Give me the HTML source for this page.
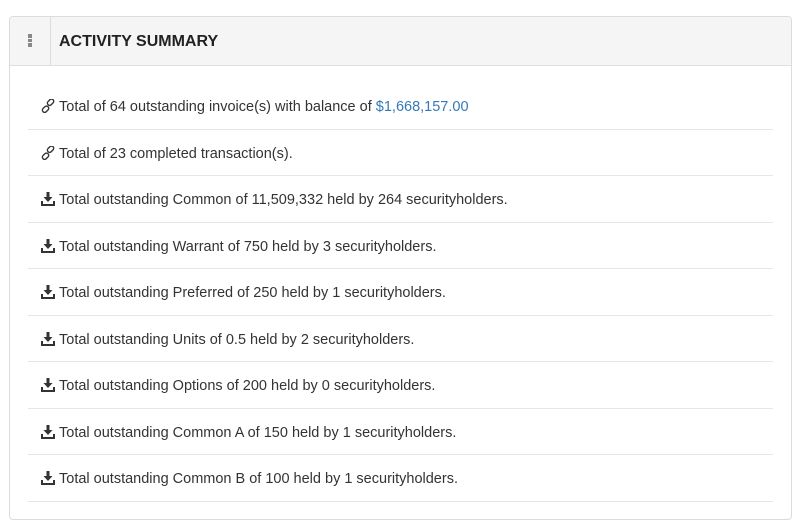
<!DOCTYPE html>
<html><head><style>
body{margin:0;background:#fff;font-family:"Liberation Sans",Arial,sans-serif;color:#333;font-size:14.5px;}
.panel{position:absolute;left:9px;top:16px;width:783px;height:504px;border:1px solid #dcdcdc;border-radius:4px;box-sizing:border-box;}
.hd{height:48px;background:#f5f5f5;border-bottom:1px solid #e0e0e0;position:relative;border-radius:4px 4px 0 0;}
.sep{position:absolute;left:40px;top:0;width:1px;height:48px;background:#ddd;}
.dots{position:absolute;left:18px;top:17px;width:4px;}
.dots i{display:block;width:4px;height:3.5px;background:#888;margin-bottom:1px;}
.title{position:absolute;left:49px;top:16px;font-weight:bold;font-size:16px;color:#222;}
.row{position:absolute;left:18px;width:745px;height:46.5px;border-bottom:1px solid #e6e6e6;box-sizing:border-box;}
.row span{position:absolute;left:31px;top:16px;white-space:nowrap;}
.row svg{position:absolute;left:12px;top:16px;}
a{color:#337ab7;text-decoration:none;}
</style></head><body>
<div class="panel">
<div class="hd"><div class="dots"><i></i><i></i><i></i></div><div class="sep"></div><div class="title">ACTIVITY SUMMARY</div></div>
</div>
<div style="position:absolute;left:10px;top:0">
<div class="row" style="top:83px"><svg width="16" height="14" viewBox="0 0 16 14"><g fill="none" stroke="#333" stroke-width="1.4"><rect x="7" y="1" width="7" height="4.5" rx="2.2" transform="rotate(-45 10.5 3.2)"/><rect x="2" y="8" width="7" height="4.5" rx="2.2" transform="rotate(-45 5.5 10.2)"/></g></svg><span>Total of 64 outstanding invoice(s) with balance of <a>$1,668,157.00</a></span></div>
<div class="row" style="top:129.5px"><svg width="16" height="14" viewBox="0 0 16 14"><g fill="none" stroke="#333" stroke-width="1.4"><rect x="7" y="1" width="7" height="4.5" rx="2.2" transform="rotate(-45 10.5 3.2)"/><rect x="2" y="8" width="7" height="4.5" rx="2.2" transform="rotate(-45 5.5 10.2)"/></g></svg><span>Total of 23 completed transaction(s).</span></div>
<div class="row" style="top:176px"><svg width="16" height="14" viewBox="0 0 16 14"><path d="M6.5 0h3v5h3l-4.5 5-4.5-5h3z M1 9h2v3h10v-3h2v5H1z" fill="#333"/></svg><span>Total outstanding Common of 11,509,332 held by 264 securityholders.</span></div>
<div class="row" style="top:222.5px"><svg width="16" height="14" viewBox="0 0 16 14"><path d="M6.5 0h3v5h3l-4.5 5-4.5-5h3z M1 9h2v3h10v-3h2v5H1z" fill="#333"/></svg><span>Total outstanding Warrant of 750 held by 3 securityholders.</span></div>
<div class="row" style="top:269px"><svg width="16" height="14" viewBox="0 0 16 14"><path d="M6.5 0h3v5h3l-4.5 5-4.5-5h3z M1 9h2v3h10v-3h2v5H1z" fill="#333"/></svg><span>Total outstanding Preferred of 250 held by 1 securityholders.</span></div>
<div class="row" style="top:315.5px"><svg width="16" height="14" viewBox="0 0 16 14"><path d="M6.5 0h3v5h3l-4.5 5-4.5-5h3z M1 9h2v3h10v-3h2v5H1z" fill="#333"/></svg><span>Total outstanding Units of 0.5 held by 2 securityholders.</span></div>
<div class="row" style="top:362px"><svg width="16" height="14" viewBox="0 0 16 14"><path d="M6.5 0h3v5h3l-4.5 5-4.5-5h3z M1 9h2v3h10v-3h2v5H1z" fill="#333"/></svg><span>Total outstanding Options of 200 held by 0 securityholders.</span></div>
<div class="row" style="top:408.5px"><svg width="16" height="14" viewBox="0 0 16 14"><path d="M6.5 0h3v5h3l-4.5 5-4.5-5h3z M1 9h2v3h10v-3h2v5H1z" fill="#333"/></svg><span>Total outstanding Common A of 150 held by 1 securityholders.</span></div>
<div class="row" style="top:455px"><svg width="16" height="14" viewBox="0 0 16 14"><path d="M6.5 0h3v5h3l-4.5 5-4.5-5h3z M1 9h2v3h10v-3h2v5H1z" fill="#333"/></svg><span>Total outstanding Common B of 100 held by 1 securityholders.</span></div>
</div>
</body></html>
